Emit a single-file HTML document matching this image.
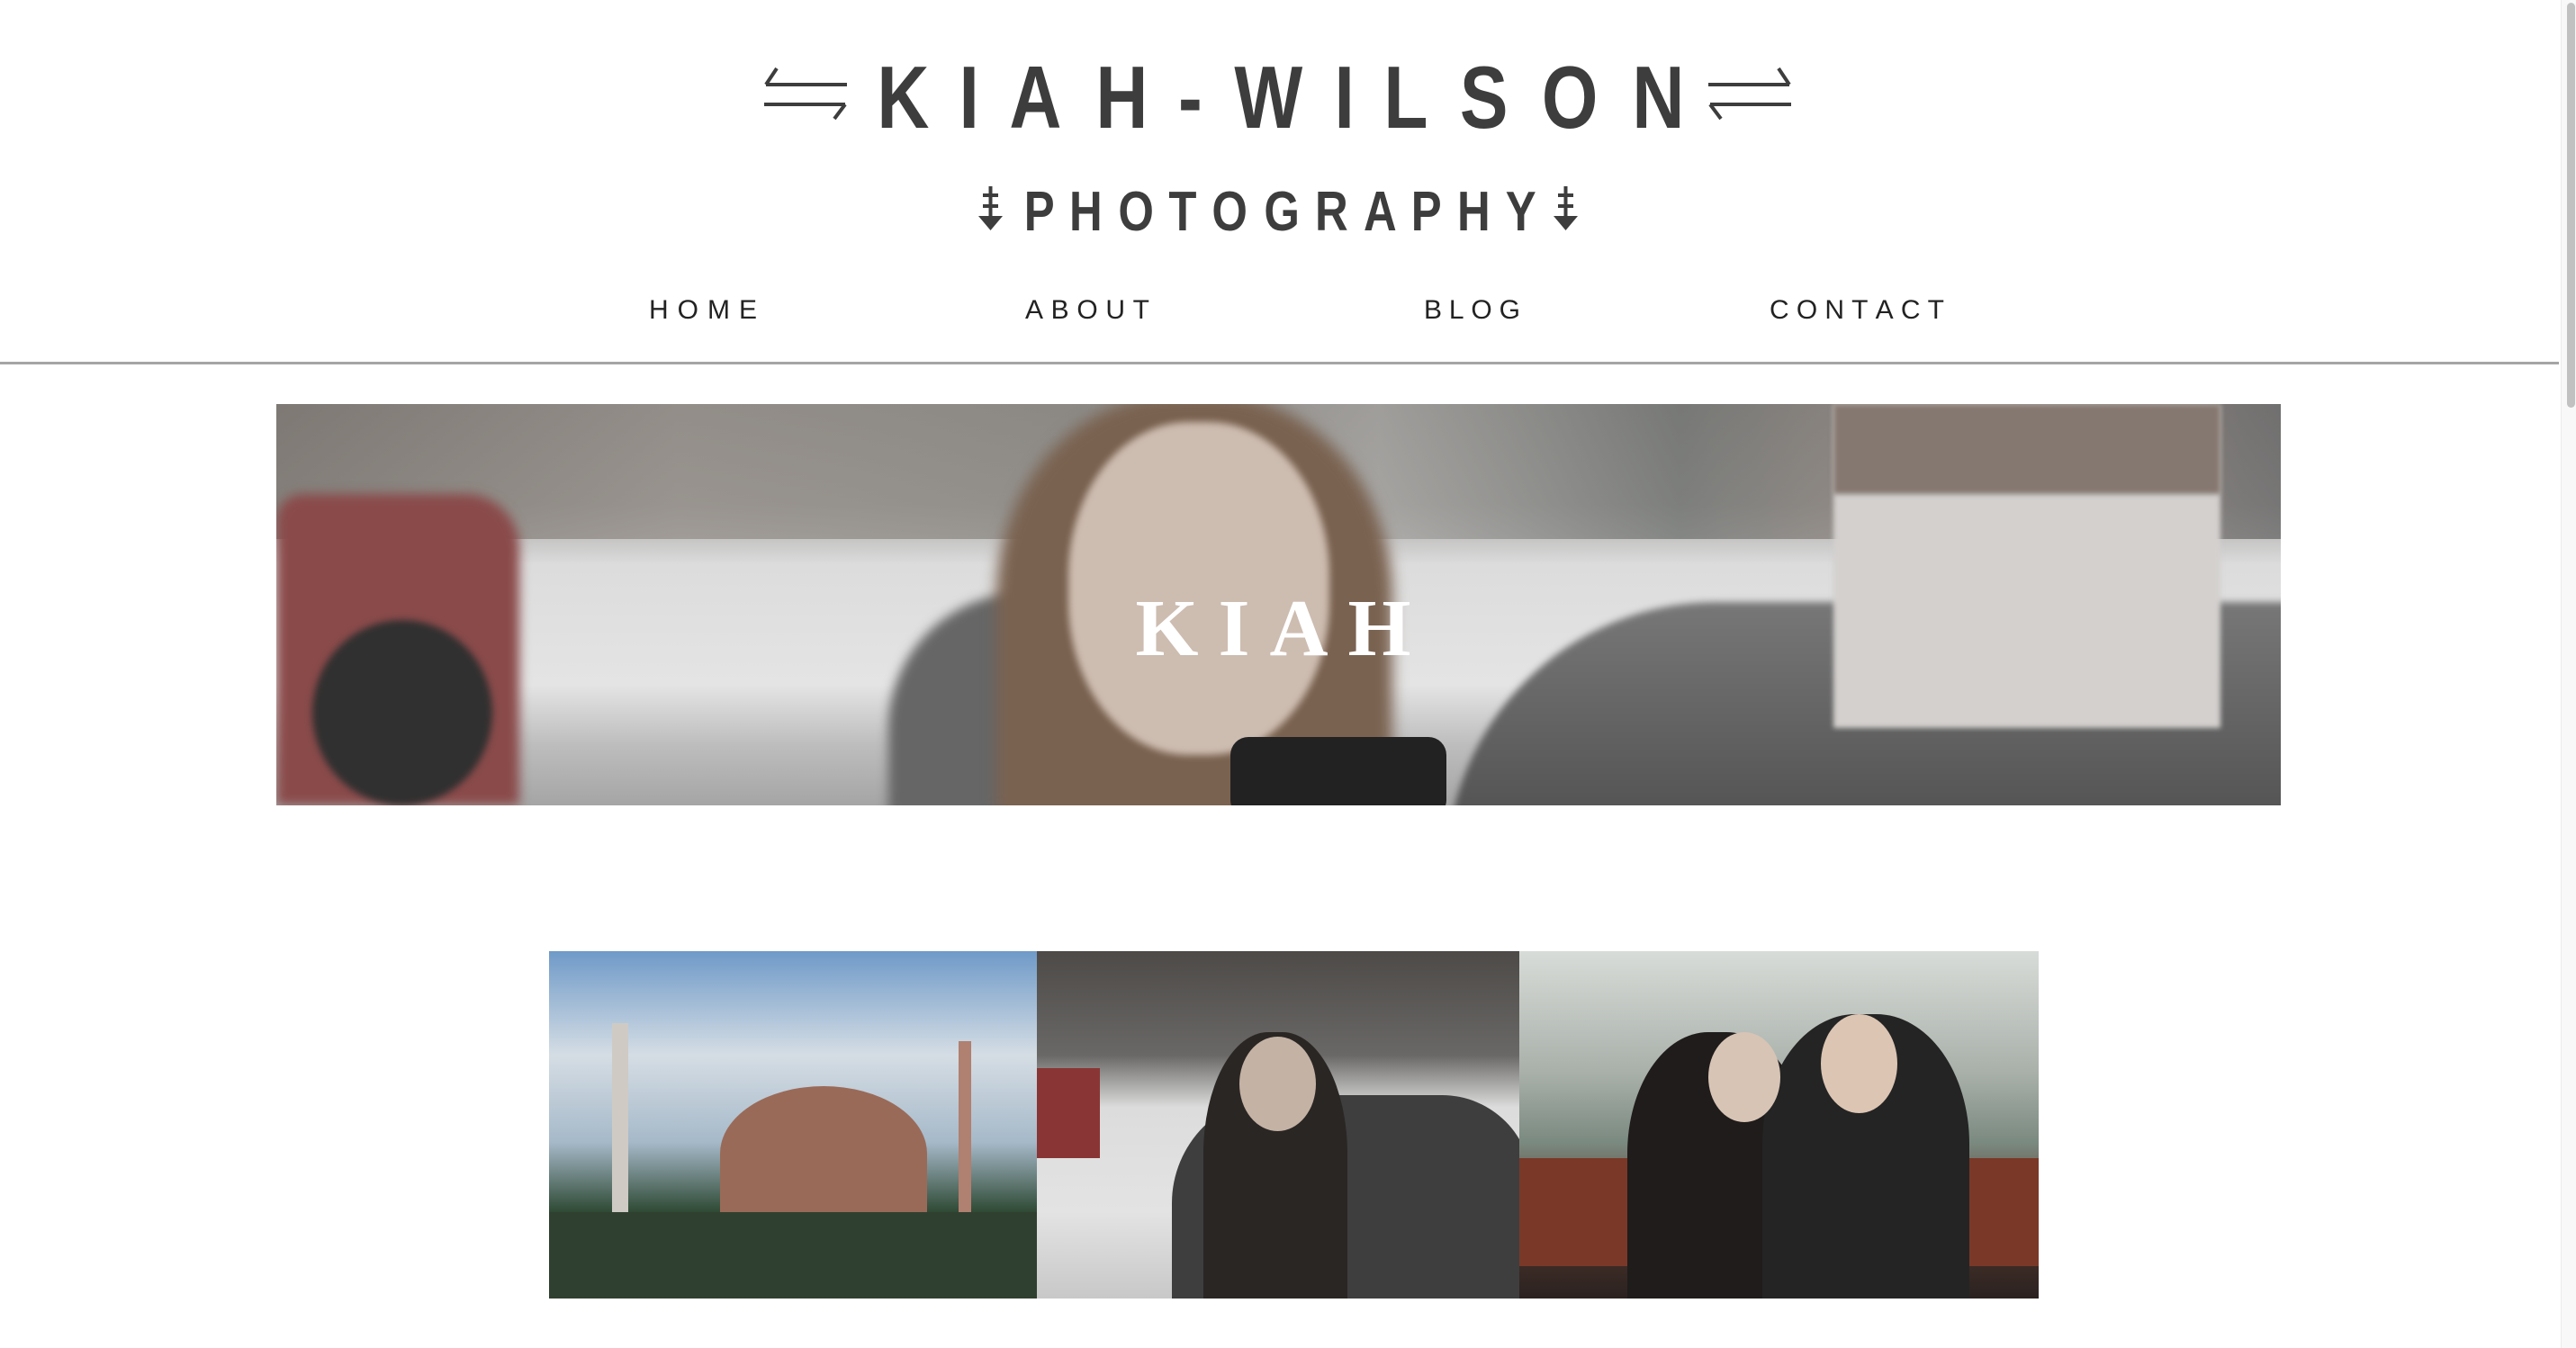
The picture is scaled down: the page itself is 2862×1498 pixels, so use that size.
<!DOCTYPE html>
<html><head><meta charset="utf-8"><style>
*{margin:0;padding:0;box-sizing:border-box}
html,body{width:2862px;height:1498px;overflow:hidden;background:#fff;font-family:"Liberation Sans",sans-serif;color:#3d3d3d}
.abs{position:absolute}
.spread{display:flex;justify-content:space-between;align-items:center}
.t span{display:inline-block;transform:scaleX(.82)}
</style></head><body>
<svg class="abs" style="left:849px;top:74px" width="92" height="60" viewBox="0 0 92 60">
<path d="M2 20H92 M2 20L14 2" stroke="#3d3d3d" stroke-width="4" fill="none"/>
<path d="M0 42H90 M90 42L78 58" stroke="#3d3d3d" stroke-width="4" fill="none"/>
</svg>
<div class="abs spread t" style="left:968px;top:56px;width:910px;height:104px;font-size:98px;line-height:104px;font-weight:bold">
<span>K</span><span>I</span><span>A</span><span>H</span><span>-</span><span>W</span><span>I</span><span>L</span><span>S</span><span>O</span><span>N</span></div>
<svg class="abs" style="left:1898px;top:74px" width="92" height="60" viewBox="0 0 92 60">
<path d="M0 20H90 M90 20L78 2" stroke="#3d3d3d" stroke-width="4" fill="none"/>
<path d="M2 42H92 M2 42L14 58" stroke="#3d3d3d" stroke-width="4" fill="none"/>
</svg>
<svg class="abs" style="left:1087px;top:207px" width="27" height="49" viewBox="0 0 27 49">
<path d="M13.5 0V36 M5 10H22 M5 22H22" stroke="#3d3d3d" stroke-width="4" fill="none"/><path d="M0 33H27L13.5 49Z" fill="#3d3d3d"/></svg>
<div class="abs spread t" style="left:1134px;top:204px;width:576px;height:64px;font-size:62px;line-height:64px;font-weight:bold">
<span>P</span><span>H</span><span>O</span><span>T</span><span>O</span><span>G</span><span>R</span><span>A</span><span>P</span><span>H</span><span>Y</span></div>
<svg class="abs" style="left:1726px;top:207px" width="27" height="49" viewBox="0 0 27 49">
<path d="M13.5 0V36 M5 10H22 M5 22H22" stroke="#3d3d3d" stroke-width="4" fill="none"/><path d="M0 33H27L13.5 49Z" fill="#3d3d3d"/></svg>
<div class="abs spread" style="left:721px;top:328px;width:120px;font-size:30px;line-height:34px;color:#222"><span>H</span><span>O</span><span>M</span><span>E</span></div>
<div class="abs spread" style="left:1139px;top:328px;width:138px;font-size:30px;line-height:34px;color:#222"><span>A</span><span>B</span><span>O</span><span>U</span><span>T</span></div>
<div class="abs spread" style="left:1582px;top:328px;width:107px;font-size:30px;line-height:34px;color:#222"><span>B</span><span>L</span><span>O</span><span>G</span></div>
<div class="abs spread" style="left:1966px;top:328px;width:194px;font-size:30px;line-height:34px;color:#222"><span>C</span><span>O</span><span>N</span><span>T</span><span>A</span><span>C</span><span>T</span></div>
<div class="abs" style="left:0;top:402px;width:2843px;height:3px;background:#a5a5a5"></div>
<div class="abs" style="left:2845px;top:0;width:17px;height:1498px;background:#f8f8f8;border-left:1px solid #ececec"></div>
<div class="abs" style="left:2852px;top:3px;width:9px;height:450px;background:#c1c1c1;border-radius:5px"></div>
<div class="abs" style="left:307px;top:449px;width:2227px;height:446px;overflow:hidden;background:linear-gradient(180deg,#8f8c8a 0%,#a8a6a4 25%,#dcdcdc 40%,#e4e4e4 70%,#bdbdbd 85%,#a5a5a5 100%)">
<div class="abs" style="left:0;top:0;width:2227px;height:150px;background:linear-gradient(90deg,#78726c,#948e88 20%,#8a8782 40%,#a5a3a0 55%,#6f7270 70%,#9a8a82 85%,#666 100%);opacity:.75"></div>
<div class="abs" style="left:0;top:100px;width:270px;height:346px;background:#8a4a4a;border-radius:30px 60px 0 0;filter:blur(6px)"></div>
<div class="abs" style="left:40px;top:240px;width:200px;height:206px;background:#303030;border-radius:50%;filter:blur(4px)"></div>
<div class="abs" style="left:680px;top:210px;width:400px;height:246px;background:#666;border-radius:150px 150px 0 0;filter:blur(6px)"></div>
<div class="abs" style="left:1300px;top:220px;width:1150px;height:300px;background:linear-gradient(180deg,#777,#4a4a4a);border-radius:300px 200px 0 0;filter:blur(4px)"></div>
<div class="abs" style="left:1730px;top:0;width:430px;height:360px;background:#d3d0ce;filter:blur(3px)"></div>
<div class="abs" style="left:1730px;top:0;width:430px;height:100px;background:#857870;filter:blur(3px)"></div>
<div class="abs" style="left:800px;top:-10px;width:440px;height:500px;background:#7a6250;border-radius:45% 45% 10% 10%;filter:blur(8px)"></div>
<div class="abs" style="left:880px;top:20px;width:290px;height:370px;background:#cdbcb0;border-radius:46%;filter:blur(4px)"></div>
<div class="abs" style="left:1060px;top:370px;width:240px;height:90px;background:#222;border-radius:20px"></div>
<div class="abs" style="left:0;top:200px;width:2227px;text-align:center;font-family:'Liberation Serif',serif;color:#fff;font-size:90px;letter-spacing:22px;line-height:100px;padding-left:10px;font-weight:bold">KIAH</div>
</div>
<div class="abs" style="left:610px;top:1057px;width:542px;height:386px;overflow:hidden;background:linear-gradient(180deg,#6f9ac8 0%,#d5dde4 30%,#a6b9c9 55%,#2f4a35 75%,#2d3a2c 100%)">
<div class="abs" style="left:190px;top:150px;width:230px;height:150px;background:#9a6a58;border-radius:60% 60% 0 0"></div>
<div class="abs" style="left:70px;top:80px;width:18px;height:240px;background:#cfcac4"></div>
<div class="abs" style="left:455px;top:100px;width:14px;height:220px;background:#b08070"></div>
<div class="abs" style="left:0;top:290px;width:542px;height:96px;background:#304030"></div>
</div>
<div class="abs" style="left:1152px;top:1057px;width:536px;height:386px;overflow:hidden;background:linear-gradient(180deg,#4d4a48 0%,#6a6866 30%,#dcdcdc 45%,#e3e3e3 75%,#c8c8c8 100%)">
<div class="abs" style="left:150px;top:160px;width:400px;height:240px;background:#3e3e3e;border-radius:120px 100px 0 0"></div>
<div class="abs" style="left:0;top:130px;width:70px;height:100px;background:#8a3535"></div>
<div class="abs" style="left:185px;top:90px;width:160px;height:300px;background:#2a2624;border-radius:45% 45% 0 0"></div>
<div class="abs" style="left:225px;top:95px;width:85px;height:105px;background:#c4b2a4;border-radius:50%"></div>
</div>
<div class="abs" style="left:1688px;top:1057px;width:577px;height:386px;overflow:hidden;background:linear-gradient(180deg,#d8dcd8 0%,#a9b0aa 35%,#7b8a80 55%,#5a3a2e 75%,#2a2220 100%)">
<div class="abs" style="left:0;top:230px;width:577px;height:120px;background:#7a3828"></div>
<div class="abs" style="left:120px;top:90px;width:200px;height:300px;background:#1f1c1b;border-radius:45% 45% 0 0"></div>
<div class="abs" style="left:270px;top:70px;width:230px;height:320px;background:#242424;border-radius:45% 45% 0 0"></div>
<div class="abs" style="left:210px;top:90px;width:80px;height:100px;background:#d7c4b5;border-radius:50%"></div>
<div class="abs" style="left:335px;top:70px;width:85px;height:110px;background:#dcc5b3;border-radius:50%"></div>
</div>
</body></html>
